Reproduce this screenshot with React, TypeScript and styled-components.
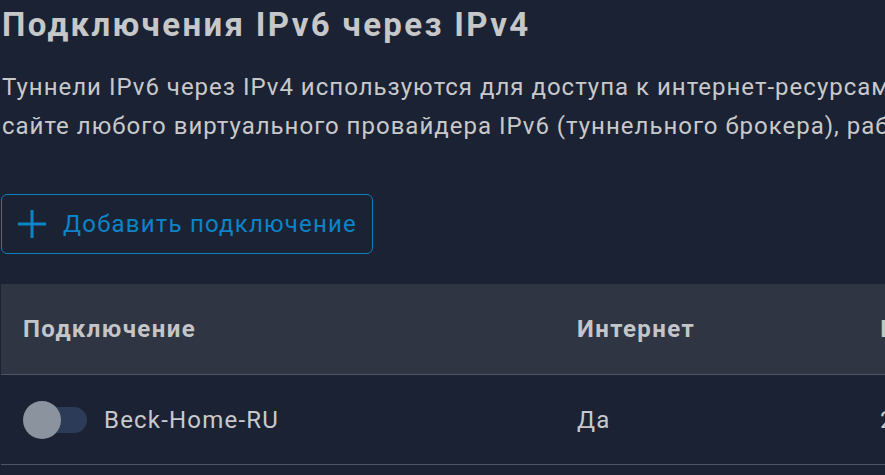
import styled, { createGlobalStyle } from 'styled-components'

const GlobalStyle = createGlobalStyle`
    html, body {
        margin: 0;
        padding: 0;
        background: #1b2233;
        overflow: hidden;
    }
    body {
        font-family: Roboto, "Noto Sans", sans-serif;
        color: #c8c9cb;
    }
`

const Page = styled.div`
    width: 1240px;
    padding-left: 1px;
`

const Title = styled.h1`
    margin: 0;
    padding: 5px 0 0 1px;
    font-size: 33px;
    font-weight: 700;
    line-height: 40px;
    letter-spacing: 2.35px;
    color: #c6c7c9;
`

const Lead = styled.p`
    margin: 23px 0 0 1px;
    font-size: 24px;
    line-height: 39px;
    letter-spacing: 1px;
    white-space: nowrap;
`

const AddButton = styled.button`
    display: flex;
    align-items: center;
    gap: 16px;
    margin-top: 48px;
    height: 60px;
    padding: 0 15px 0 15px;
    background: transparent;
    border: 1px solid #0b7fc1;
    border-radius: 6px;
    color: #0b84c8;
    font-family: inherit;
    font-size: 24px;
    letter-spacing: 1.2px;
    cursor: pointer;
    svg {
        display: block;
    }
`

const Table = styled.div`
    margin-top: 30px;
`

const Row = styled.div<{ $head?: boolean }>`
    display: grid;
    grid-template-columns: 554px 303px 1fr;
    align-items: center;
    height: ${p => (p.$head ? 90 : 89)}px;
    padding-left: 22px;
    background: ${p => (p.$head ? '#2f3543' : 'transparent')};
    border-bottom: 1px solid #4d5464;
    font-size: 24px;
    font-weight: ${p => (p.$head ? 700 : 400)};
    letter-spacing: ${p => (p.$head ? 1.4 : 1.2)}px;
    color: ${p => (p.$head ? '#c4c5c8' : '#c8c9cb')};
    white-space: nowrap;
`

const NameCell = styled.div`
    display: flex;
    align-items: center;
    gap: 16px;
`

const Toggle = styled.span`
    position: relative;
    display: inline-block;
    width: 65px;
    height: 38px;
    &::before {
        content: '';
        position: absolute;
        left: 12px;
        top: 6px;
        width: 52px;
        height: 26px;
        border-radius: 13px;
        background: #2c3b57;
    }
    &::after {
        content: '';
        position: absolute;
        left: 0;
        top: 0;
        width: 38px;
        height: 38px;
        border-radius: 50%;
        background: #8a939e;
    }
`

const PlusIcon = () => (
    <svg width="30" height="30" viewBox="0 0 30 30" fill="none">
        <path d="M15 1v28M1 15h28" stroke="#0b84c8" strokeWidth="3" />
    </svg>
)

export default function App() {
    return (
        <Page>
            <GlobalStyle />
            <Title>Подключения IPv6 через IPv4</Title>
            <Lead>
                Туннели IPv6 через IPv4 используются для доступа к интернет-ресурсам IPv6 при отсутствии его поддержки у провайдера. Зарегистрируйтесь на
                <br />
                сайте любого виртуального провайдера IPv6 (туннельного брокера), работающего в вашем регионе, и получите параметры туннеля.
            </Lead>
            <AddButton>
                <PlusIcon />
                Добавить подключение
            </AddButton>
            <Table>
                <Row $head>
                    <div>Подключение</div>
                    <div>Интернет</div>
                    <div>IPv6-адрес</div>
                </Row>
                <Row>
                    <NameCell>
                        <Toggle />
                        Beck-Home-RU
                    </NameCell>
                    <div>Да</div>
                    <div>2001:470::</div>
                </Row>
            </Table>
        </Page>
    )
}
